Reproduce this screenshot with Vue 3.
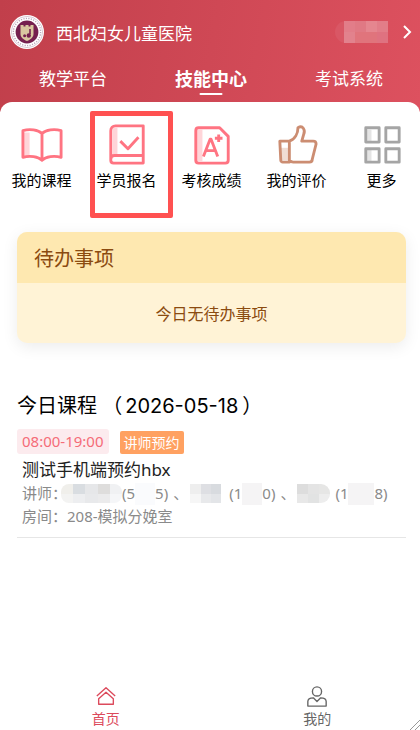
<template>
  <div class="page">
    <header class="header">
      <button type="button" class="hospital">
        <svg class="logo" viewBox="0 0 36 36" aria-hidden="true">
          <circle cx="18" cy="18" r="17" fill="#fff" />
          <circle cx="18" cy="18" r="15.6" fill="none" stroke="#c9b3c4" stroke-width="0.7" />
          <circle cx="18" cy="18" r="13.6" fill="none" stroke="#b9a5b8" stroke-width="1.4" stroke-dasharray="1.2 1.3" />
          <circle cx="18" cy="18" r="11.4" fill="#75204f" />
          <path d="M11.5 11h3v1.500h2V11h3v1.500h2V11h3v9c0 3.500-3 5.500-6.500 7-3.500-1.500-6.500-3.500-6.500-7z" fill="#d9c7a0" />
          <path d="M21 15v5" fill="none" stroke="#75204f" stroke-width="1.600" />
          <circle cx="19.800" cy="21.500" r="2.200" fill="#75204f" />
          <circle cx="15.600" cy="21.800" r="1.500" fill="#75204f" />
        </svg>
        <span class="hospital-name">西北妇女儿童医院</span>
        <span class="user">
          <i v-for="(c, i) in userCells" :key="i" :style="{ background: c }"></i>
        </span>
        <svg class="arrow" viewBox="0 0 10 16" aria-hidden="true">
          <path d="M2 2l6 6-6 6" />
        </svg>
      </button>

      <nav class="tabs">
        <button v-for="tab in tabs" :key="tab" type="button" class="tab" :class="{ active: tab === activeTab }"
          @click="activeTab = tab">
          {{ tab }}
        </button>
      </nav>
    </header>

    <main class="sheet">
      <!-- 功能入口 -->
      <div class="menu">
        <button v-for="item in menus" :key="item.key" type="button" class="menu-item"
          :class="[item.key, { marked: item.key === 'signup' }]">
          <svg v-if="item.key === 'course'" viewBox="0 0 44 44" aria-hidden="true">
            <path class="tint" d="M3 10h6v25H3z" />
            <path d="M22 11C18 7 9 6 2 8v28c7-2 16-1 20 3 4-4 13-5 20-3V8c-7-2-16-1-20 3zM22 11v28" />
          </svg>
          <svg v-else-if="item.key === 'signup'" viewBox="0 0 44 44" aria-hidden="true">
            <path class="tint" d="M7 5h5v28H7z" />
            <path d="M39 34V3H10C7 3 5 5 5 8v31c0 2 1 3 3 3h31v-8H9c-2 0-4 1-4 4" />
            <path d="M15 19l8 8 11-12" />
          </svg>
          <svg v-else-if="item.key === 'score'" viewBox="0 0 44 44" aria-hidden="true">
            <path class="tint" d="M6 7h6v33H6z" />
            <path d="M8 5h22l9 9v25c0 2-1 3-3 3H8c-2 0-3-1-3-3V8c0-2 1-3 3-3z" />
            <path d="M13 35l7-18h1l7 18M15 29h11M25 16h8M29 12v8" />
          </svg>
          <svg v-else-if="item.key === 'review'" viewBox="0 0 44 44" aria-hidden="true">
            <path class="tint" d="M5 26h8v13H5z" />
            <path d="M14 19v22H7c-1 0-2-1-2-2L4 19h10c6-2 9-8 9-14 5-3 8 2 6 7l-2 7h12c2 0 3 1 3 3l-4 16c0 2-1 3-3 3H18c-2 0-3-1-4-2" />
          </svg>
          <svg v-else viewBox="0 0 44 44" aria-hidden="true">
            <path class="tint" d="M5 7h6v14H5zM5 28h6v12H5z" />
            <path d="M5 5h14v15H5zM26 5h14v15H26zM5 27h14v14H5zM26 27h14v14H26z" />
          </svg>
          <span>{{ item.label }}</span>
        </button>
      </div>

      <!-- 待办事项 -->
      <section class="todo">
        <h2>待办事项</h2>
        <p>今日无待办事项</p>
      </section>

      <!-- 今日课程 -->
      <section class="courses">
        <h2>今日课程 （<span class="date">2026-05-18</span>）</h2>
        <article class="course-card">
          <div class="badges">
            <span class="time">08:00-19:00</span>
            <span class="type">讲师预约</span>
          </div>
          <h3>测试手机端预约hbx</h3>
          <p class="teachers">
            <span>讲师：</span>
            <span class="mosaic name-long"><i v-for="(c, i) in nameCells.first" :key="i" :style="{ background: c }"></i></span>
            <span>(5</span>
            <span class="mask pale"></span>
            <span>5)</span>
            <span class="sep">、</span>
            <span class="mosaic name"><i v-for="(c, i) in nameCells.second" :key="i" :style="{ background: c }"></i></span>
            <span class="code">(1</span>
            <span class="mask"></span>
            <span>0)</span>
            <span class="sep">、</span>
            <span class="mosaic name round"><i v-for="(c, i) in nameCells.third" :key="i" :style="{ background: c }"></i></span>
            <span class="code-last">(1</span>
            <span class="mask wide"></span>
            <span>8)</span>
          </p>
          <p>房间：208-模拟分娩室</p>
        </article>
      </section>
    </main>

    <nav class="tabbar">
      <a href="#home" class="current">
        <svg viewBox="0 0 24 24" aria-hidden="true">
          <path d="M2 12l10-9 10 9M4 21v-6l8-7 8 7v6z" />
        </svg>
        <span>首页</span>
      </a>
      <a href="#mine">
        <svg viewBox="0 0 24 24" aria-hidden="true">
          <circle cx="12" cy="7" r="5" />
          <path d="M8 14l4 4 4-4c4 0 6 1 6 4v5H2v-5c0-3 2-4 6-4z" />
        </svg>
        <span>我的</span>
      </a>
    </nav>

    <svg class="grip" viewBox="0 0 10 10" aria-hidden="true">
      <path d="M0 10L10 0M5 10l5-5" />
    </svg>
  </div>
</template>

<script setup>
import { ref } from 'vue'

const tabs = ['教学平台', '技能中心', '考试系统']
const activeTab = ref('技能中心')

const menus = [
  { key: 'course', label: '我的课程' },
  { key: 'signup', label: '学员报名' },
  { key: 'score', label: '考核成绩' },
  { key: 'review', label: '我的评价' },
  { key: 'more', label: '更多' },
]

// 姓名打码色块
const userCells = ['#e27d89', '#e07984', '#e5868f', '#e27d88', '#e2828d', '#e0747c', '#e0747c', '#df7280']
const nameCells = {
  first: ['#f0efeb', '#d9dde1', '#e6e7e9', '#dedddc', '#f0f1f3', '#f3f3f2', '#edeef0', '#e8e9eb', '#ebebec', '#f5f6f8'],
  second: ['#eeeeee', '#dedfe3', '#d8dbdf', '#f6f6f6', '#e8e9eb', '#e3e5e8'],
  third: ['#dddddd', '#e4e4e4', '#e6e6e5', '#e8e8e8', '#e2e3e3', '#ededed'],
}
</script>

<style>
body {
  margin: 0;
  background: #fff;
}
</style>

<style scoped>
.page {
  position: relative;
  display: flex;
  flex-direction: column;
  min-height: 100vh;
  overflow: hidden;
  background: #fff;
  color: #000;
  font-family: 'Noto Sans', 'Noto Sans CJK SC', sans-serif;
}

button {
  padding: 0;
  border: none;
  background: none;
  color: inherit;
  font: inherit;
  cursor: pointer;
}

h2,
h3,
p {
  margin: 0;
  font-weight: 400;
}

/* 顶部 */
.header {
  padding-bottom: 18px;
  background: linear-gradient(100deg, #c13f4b, #dd515f);
  color: #fff;
}

.hospital {
  display: flex;
  align-items: center;
  width: 100%;
  height: 64px;
  padding: 0 8px 0 9px;
  text-align: left;
}

.logo {
  width: 36px;
  height: 36px;
  margin-right: 11px;
}

.hospital-name {
  flex: 1;
  font-size: 17px;
}

.user {
  display: grid;
  grid-template-columns: repeat(4, 11px);
  grid-auto-rows: 11px;
  margin-right: 14px;
  padding-left: 9px;
  border-radius: 11px 0 0 11px;
  background: #d95765;
}

.arrow {
  width: 10px;
  height: 16px;
  fill: none;
  stroke: #fff;
  stroke-width: 2;
}

.tabs {
  display: flex;
  padding: 0 2px 0 4px;
}

.tab {
  position: relative;
  flex: 1;
  height: 30px;
  font-size: 17px;
  line-height: 30px;
}

.tab.active {
  font-size: 18px;
  font-weight: 700;
}

.tab.active::after {
  content: '';
  position: absolute;
  bottom: -1px;
  left: 50%;
  width: 23px;
  height: 2px;
  border-radius: 1px;
  background: #fff;
  transform: translateX(-50%);
}

.sheet {
  flex: 1;
  margin-top: -10px;
  padding: 9px 14px 0 17px;
  border-radius: 12px 12px 0 0;
  background: #fff;
}

/* 功能入口 */
.menu {
  display: grid;
  grid-template-columns: repeat(5, 1fr);
  margin: 0 -18px;
}

.menu-item {
  position: relative;
  display: flex;
  flex-direction: column;
  align-items: center;
  height: 107px;
  padding-top: 12px;
  color: #ff7482;
}

.menu-item svg {
  width: 42px;
  height: 42px;
  fill: none;
  stroke: currentColor;
  stroke-width: 3;
  stroke-linejoin: round;
}

.menu-item .tint {
  fill: currentColor;
  fill-opacity: 0.3;
  stroke: none;
}

.menu-item span {
  margin-top: 4px;
  color: #000;
  font-size: 15px;
  line-height: 22px;
  white-space: nowrap;
}

.menu-item.review {
  color: #cc8d72;
}

.menu-item.more {
  color: #a5a5a5;
}

.marked::after {
  content: '';
  position: absolute;
  inset: 0 -4px 0 6px;
  border: 5px solid #ff5151;
  border-radius: 2px;
}

/* 待办事项 */
.todo {
  margin-top: 14px;
  overflow: hidden;
  border-radius: 10px;
  background: #fff3d6;
  box-shadow: 0 4px 16px rgba(0, 0, 0, 0.08);
  color: #8b4b10;
}

.todo h2 {
  padding: 2px 17px 0;
  background: #fee8b0;
  font-size: 20px;
  line-height: 49px;
}

.todo p {
  padding-top: 2px;
  font-size: 16px;
  line-height: 58px;
  text-align: center;
}

/* 今日课程 */
.courses {
  margin-top: 48px;
}

.courses h2 {
  font-size: 20px;
  line-height: 30px;
}

.date {
  margin: 0 4px 0 3px;
  font-family: Inter, sans-serif;
}

.course-card {
  padding-bottom: 9px;
  border-bottom: 1px solid #e6e6e6;
}

.badges {
  display: flex;
  align-items: flex-end;
  gap: 11px;
  margin-top: 8px;
}

.time {
  padding: 0 5px;
  border-radius: 3px;
  background: #fcebee;
  color: #f56c78;
  font-size: 15px;
  line-height: 25px;
}

.type {
  padding: 0 4px;
  border-radius: 2px;
  background: #ffa161;
  color: #fff;
  font-size: 14px;
  line-height: 23px;
}

.course-card h3 {
  margin-top: 3px;
  padding-left: 5px;
  color: #222;
  font-size: 17px;
  line-height: 25px;
}

.course-card p {
  padding-left: 5px;
  color: #8a8a8a;
  font-size: 15px;
  line-height: 23px;
  white-space: nowrap;
}

.course-card .teachers {
  display: flex;
  align-items: center;
}

.sep {
  width: 17px;
  padding-left: 5px;
}

.code {
  padding-left: 8px;
}

.code-last {
  padding-left: 5px;
}

.mosaic {
  display: grid;
  grid-template-columns: repeat(3, 1fr);
  overflow: hidden;
  height: 19px;
}

.name-long {
  grid-template-columns: repeat(5, 1fr);
  width: 61px;
  margin-left: -6px;
  border-radius: 8px;
}

.name {
  width: 31px;
}

.round {
  width: 33px;
  border-radius: 0 9px 9px 0;
}

.mask {
  width: 20px;
  height: 22px;
  background: #f5f4f5;
}

.mask.pale {
  background: #fafbfd;
}

.mask.wide {
  width: 26px;
}

/* 底部导航 */
.tabbar {
  display: flex;
  height: 50px;
  margin-right: -3px;
  background: #fff;
}

.tabbar a {
  flex: 1;
  display: flex;
  flex-direction: column;
  align-items: center;
  color: #666;
  font-size: 14px;
  line-height: 20px;
  text-decoration: none;
}

.tabbar a.current {
  color: #dc4a5c;
}

.tabbar svg {
  width: 22px;
  height: 22px;
  margin: 5px 0 2px;
  fill: none;
  stroke: currentColor;
  stroke-width: 1.5;
  stroke-linejoin: round;
}

.grip {
  position: absolute;
  right: 0;
  bottom: 0;
  width: 10px;
  height: 10px;
  stroke: #999;
}
</style>
